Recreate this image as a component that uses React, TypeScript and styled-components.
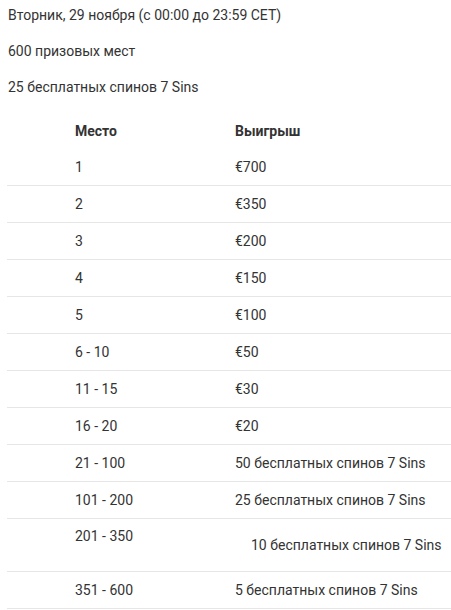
import React from "react";
import styled, { createGlobalStyle } from "styled-components";

const GlobalStyle = createGlobalStyle`
  body {
    margin: 0;
    background: #ffffff;
    font-family: Roboto, "Noto Sans", Arial, sans-serif;
    color: #333333;
    overflow: hidden;
  }
`;

const Container = styled.div`
  padding: 4px 0px 0px 7px;
  font-size: 14px;
`;

const Text = styled.p`
  margin: 0px 0px 13px 1px;
  line-height: 23px;
`;

const Table = styled.div`
  margin-top: 14px;
`;

const Row = styled.div<{ $head?: boolean; $tall?: boolean }>`
  display: grid;
  grid-template-columns: 68px 160px 1fr;
  align-items: ${(p) => (p.$tall ? "start" : "center")};
  min-height: ${(p) => (p.$tall ? "52px" : "36px")};
  line-height: 23px;
  font-weight: ${(p) => (p.$head ? 700 : 400)};
  border-bottom: ${(p) => (p.$head ? "none" : "1px solid #e6e6e6")};
`;

const Cell = styled.div<{ $shift?: boolean }>`
  padding-top: ${(p) => (p.$shift ? "15px" : "0px")};
  padding-left: ${(p) => (p.$shift ? "16px" : "0px")};
  white-space: nowrap;
`;

const TopCell = styled.div<{ $tall?: boolean }>`
  padding-top: ${(p) => (p.$tall ? "6px" : "0px")};
`;

const prizes = [
  ["1", "€700"],
  ["2", "€350"],
  ["3", "€200"],
  ["4", "€150"],
  ["5", "€100"],
  ["6 - 10", "€50"],
  ["11 - 15", "€30"],
  ["16 - 20", "€20"],
  ["21 - 100", "50 бесплатных спинов 7 Sins"],
  ["101 - 200", "25 бесплатных спинов 7 Sins"],
  ["201 - 350", "10 бесплатных спинов 7 Sins"],
  ["351 - 600", "5 бесплатных спинов 7 Sins"],
];

function App() {
  return (
    <>
      <GlobalStyle />
      <Container>
        <Text>Вторник, 29 ноября (с 00:00 до 23:59 CET)</Text>
        <Text>600 призовых мест</Text>
        <Text>25 бесплатных спинов 7 Sins</Text>
        <Table>
          <Row $head>
            <span />
            <Cell>Место</Cell>
            <Cell>Выигрыш</Cell>
          </Row>
          {prizes.map(([place, prize]) => {
            // в этой строке приз стоит ниже и со сдвигом, как в оригинале
            const tall = place === "201 - 350";
            return (
              <Row key={place} $tall={tall}>
                <span />
                <TopCell $tall={tall}>{place}</TopCell>
                <Cell $shift={tall}>{prize}</Cell>
              </Row>
            );
          })}
        </Table>
      </Container>
    </>
  );
}

export default App;
